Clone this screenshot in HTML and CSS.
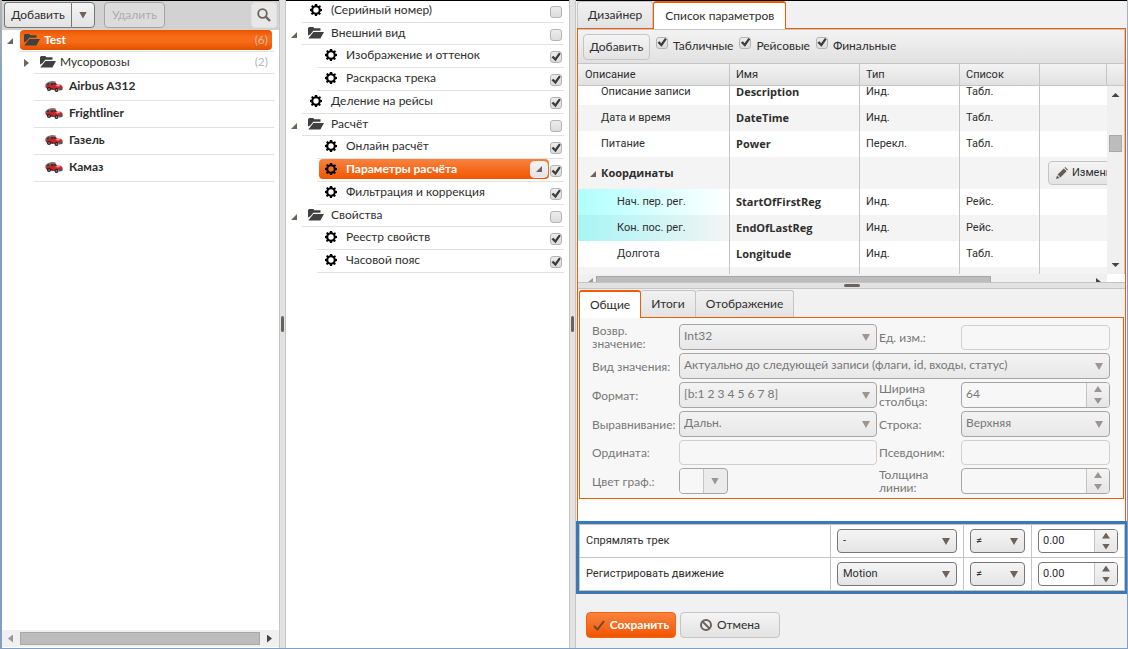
FILE: index.html
```html
<!DOCTYPE html>
<html lang="ru">
<head>
<meta charset="utf-8">
<title>Список параметров</title>
<link rel="stylesheet" href="styles.css">
</head>
<body>
<svg class="sprite" aria-hidden="true">
  <symbol id="folder" viewBox="0 0 16 12"><path fill="#404040" d="M0 1.2 1 0h4.2l1.2 1.3h6.1v2.4H5.2L2.5 7.2 0 8.6zM.3 11.5 5.4 4.9H16l-3.6 6.6z"/></symbol>
  <symbol id="gear" viewBox="0 0 12 12"><path fill="#000" fill-rule="evenodd" d="M4.9 0h2.2l.4 1.6 1 .4L10 1.2 11 2.4l-.9 1.4.4 1 1.5.3v2l-1.6.4-.4 1 .9 1.3-1.3 1.3-1.4-.9-.9.4L7 12H5l-.4-1.5-1-.4-1.400.9L.9 9.700l.9-1.300-.4-1L0 7V5l1.500-.4.4-1L1.100 2.300 2.400 1l1.300.9.9-.4zM6 3.300a2.700 2.700 0 1 0 0 5.400 2.700 2.700 0 0 0 0-5.400z"/></symbol>
  <symbol id="open" viewBox="0 0 6 6"><path fill="#6e6259" d="M6 0v6H0z"/></symbol>
  <symbol id="closed" viewBox="0 0 5 8"><path fill="#6e6259" d="M0 0l5 4-5 4z"/></symbol>
  <symbol id="car" viewBox="0 0 18 11"><path fill="#777" d="M0 3.500 3 1l4-1 4 .5L9 2 2 4.500z"/><path fill="#c9242c" d="M0 4.500 4 4l1.500-2L10.500 1.200 12 3.500l4 .3 1.500 1.700v2L10 9 1 7z"/><path fill="#333" d="M1 4.500 2.500 2.500 4.500 2 4 4.300zM5.500 4 6.300 2.300l1.900-.3v2.200zM8.900 2h1.400l1 1.800-2.400.3z"/><path fill="#f4a5a5" d="M10 4.700l3-.6 3 .6-3 .9z"/><path fill="#7e1018" d="M1.500 6.500 8 7.200l1 1.800-7-1z"/><circle cx="4" cy="8" r="2" fill="#222"/><circle cx="11.500" cy="9" r="2" fill="#222"/><circle cx="11.500" cy="9" r=".8" fill="#aaa"/><circle cx="4" cy="8" r=".8" fill="#aaa"/><path fill="#555" d="M13.500 7.200l4-.7V9l-3.500.5z"/></symbol>
</svg>
<div class="app">
  <aside class="objects">
    <div class="objects-bar">
      <div class="split"><button class="btn dark">Добавить</button><button class="btn dark drop" aria-label="Меню"><i class="down"></i></button></div>
      <button class="btn del" disabled>Удалить</button>
      <button class="btn find" aria-label="Поиск"><svg width="14" height="14" viewBox="0 0 14 14"><circle cx="5.500" cy="5.500" r="4.300" fill="none" stroke="#6a625d" stroke-width="1.800"/><path d="M8.500 8.500 13 13" stroke="#6a625d" stroke-width="2.400"/></svg></button>
    </div>
    <ul class="tree fleet">
      <li>
        <div class="row"><span class="tog"><svg width="6" height="6"><use href="#open"/></svg></span><div class="line"><div class="node deep"><svg width="16" height="12"><use href="#folder"/></svg><b>Test</b><span class="count">(6)</span></div></div></div>
        <ul>
          <li><div class="row"><span class="tog"><svg width="5" height="8"><use href="#closed"/></svg></span><div class="line"><div class="node"><svg width="16" height="12"><use href="#folder"/></svg><span>Мусоровозы</span><span class="count">(2)</span></div></div></div></li>
          <li><div class="row tall"><span class="tog"></span><div class="line"><div class="node"><svg width="18" height="11"><use href="#car"/></svg><b>Airbus A312</b></div></div></div></li>
          <li><div class="row tall"><span class="tog"></span><div class="line"><div class="node"><svg width="18" height="11"><use href="#car"/></svg><b>Frightliner</b></div></div></div></li>
          <li><div class="row tall"><span class="tog"></span><div class="line"><div class="node"><svg width="18" height="11"><use href="#car"/></svg><b>Газель</b></div></div></div></li>
          <li><div class="row tall"><span class="tog"></span><div class="line"><div class="node"><svg width="18" height="11"><use href="#car"/></svg><b>Камаз</b></div></div></div></li>
        </ul>
      </li>
    </ul>
    <div class="hbar"><i class="left"></i><div class="thumb"></div><i class="right"></i></div>
  </aside>
  <div class="vsplit"><i></i></div>
  <nav class="modules">
    <ul class="tree">
      <li><div class="row leaf"><span class="tog"></span><div class="line"><label class="node" for="m1"><svg width="16" height="12"><use href="#gear"/></svg><span>(Серийный номер)</span></label><input type="checkbox" id="m1"></div></div></li>
      <li>
        <div class="row"><span class="tog"><svg width="6" height="6"><use href="#open"/></svg></span><div class="line"><label class="node" for="m2"><svg width="16" height="12"><use href="#folder"/></svg><span>Внешний вид</span></label><input type="checkbox" id="m2"></div></div>
        <ul>
          <li><div class="row leaf"><span class="tog"></span><div class="line"><label class="node" for="m3"><svg width="16" height="12"><use href="#gear"/></svg><span>Изображение и оттенок</span></label><input type="checkbox" id="m3" checked></div></div></li>
          <li><div class="row leaf"><span class="tog"></span><div class="line"><label class="node" for="m4"><svg width="16" height="12"><use href="#gear"/></svg><span>Раскраска трека</span></label><input type="checkbox" id="m4" checked></div></div></li>
        </ul>
      </li>
      <li><div class="row leaf"><span class="tog"></span><div class="line"><label class="node" for="m5"><svg width="16" height="12"><use href="#gear"/></svg><span>Деление на рейсы</span></label><input type="checkbox" id="m5" checked></div></div></li>
      <li>
        <div class="row"><span class="tog"><svg width="6" height="6"><use href="#open"/></svg></span><div class="line"><label class="node" for="m6"><svg width="16" height="12"><use href="#folder"/></svg><span>Расчёт</span></label><input type="checkbox" id="m6"></div></div>
        <ul>
          <li><div class="row leaf"><span class="tog"></span><div class="line"><label class="node" for="m7"><svg width="16" height="12"><use href="#gear"/></svg><span>Онлайн расчёт</span></label><input type="checkbox" id="m7" checked></div></div></li>
          <li><div class="row leaf"><span class="tog"></span><div class="line"><div class="node current"><svg width="16" height="12"><use href="#gear"/></svg><label for="m8"><b>Параметры расчёта</b></label><button class="btn more" aria-label="Ещё"><svg width="6" height="6"><use href="#open"/></svg></button></div><input type="checkbox" id="m8" checked></div></div></li>
          <li><div class="row leaf"><span class="tog"></span><div class="line"><label class="node" for="m9"><svg width="16" height="12"><use href="#gear"/></svg><span>Фильтрация и коррекция</span></label><input type="checkbox" id="m9" checked></div></div></li>
        </ul>
      </li>
      <li>
        <div class="row"><span class="tog"><svg width="6" height="6"><use href="#open"/></svg></span><div class="line"><label class="node" for="m10"><svg width="16" height="12"><use href="#folder"/></svg><span>Свойства</span></label><input type="checkbox" id="m10"></div></div>
        <ul>
          <li><div class="row leaf"><span class="tog"></span><div class="line"><label class="node" for="m11"><svg width="16" height="12"><use href="#gear"/></svg><span>Реестр свойств</span></label><input type="checkbox" id="m11" checked></div></div></li>
          <li><div class="row leaf"><span class="tog"></span><div class="line"><label class="node" for="m12"><svg width="16" height="12"><use href="#gear"/></svg><span>Часовой пояс</span></label><input type="checkbox" id="m12" checked></div></div></li>
        </ul>
      </li>
    </ul>
  </nav>
  <div class="vsplit"><i></i></div>
  <main class="editor">
    <div class="tabs main-tabs"><button class="tab">Дизайнер</button><button class="tab active">Список параметров</button></div>
    <section class="panel">
      <div class="toolbar">
        <button class="btn">Добавить</button>
        <label><input type="checkbox" checked>Табличные</label>
        <label><input type="checkbox" checked>Рейсовые</label>
        <label><input type="checkbox" checked>Финальные</label>
      </div>
      <table class="grid head">
        <colgroup><col class="c1"><col class="c2"><col class="c3"><col class="c4"><col><col class="c6"></colgroup>
        <thead><tr><th>Описание</th><th>Имя</th><th>Тип</th><th>Список</th><th></th><th></th></tr></thead>
      </table>
      <div class="view">
        <div class="clip">
          <table class="grid body">
            <colgroup><col class="c1"><col class="c2"><col class="c3"><col class="c4"><col></colgroup>
            <tbody>
              <tr><td class="in1">Описание записи</td><td><b>Description</b></td><td>Инд.</td><td>Табл.</td><td></td></tr>
              <tr><td class="in1">Дата и время</td><td><b>DateTime</b></td><td>Инд.</td><td>Табл.</td><td></td></tr>
              <tr><td class="in1">Питание</td><td><b>Power</b></td><td>Перекл.</td><td>Табл.</td><td></td></tr>
              <tr class="group"><td><svg width="6" height="6"><use href="#open"/></svg><b>Координаты</b></td><td></td><td></td><td></td><td class="act"><button class="btn"><svg width="12" height="12" viewBox="0 0 12 12"><path fill="#655b55" d="M0 12l1-3.600L3.600 11zM1.600 7.600 7.800 1.400l2.800 2.800-6.200 6.200zM8.500.8 9.300 0 12 2.700l-.8.800z"/></svg>Изменить</button></td></tr>
              <tr class="mark"><td class="in2">Нач. пер. рег.</td><td><b>StartOfFirstReg</b></td><td>Инд.</td><td>Рейс.</td><td></td></tr>
              <tr class="mark"><td class="in2">Кон. пос. рег.</td><td><b>EndOfLastReg</b></td><td>Инд.</td><td>Рейс.</td><td></td></tr>
              <tr><td class="in2">Долгота</td><td><b>Longitude</b></td><td>Инд.</td><td>Табл.</td><td></td></tr>
              <tr><td></td><td></td><td></td><td></td><td></td></tr>
            </tbody>
          </table>
        </div>
        <div class="vbar"><i class="up"></i><div class="thumb"></div><i class="down"></i></div>
      </div>
      <div class="hclip"><i class="left"></i><div class="thumb"></div><i class="right"></i></div>
      <div class="hsplit"><i></i></div>
      <div class="tabs sub-tabs"><button class="tab active">Общие</button><button class="tab">Итоги</button><button class="tab">Отображение</button></div>
      <form class="props">
        <label for="f1">Возвр.<br>значение:</label>
        <div class="sel"><select id="f1" disabled><option>Int32</option></select></div>
        <label class="second" for="f2">Ед. изм.:</label>
        <input id="f2" type="text" disabled>
        <label for="f3">Вид значения:</label>
        <div class="sel wide"><select id="f3" disabled><option>Актуально до следующей записи (флаги, id, входы, статус)</option></select></div>
        <label for="f4">Формат:</label>
        <div class="sel"><select id="f4" disabled><option>[b:1 2 3 4 5 6 7 8]</option></select></div>
        <label class="second" for="f5">Ширина<br>столбца:</label>
        <div class="num off"><input id="f5" type="text" value="64" disabled><div class="spin"><button type="button" disabled aria-label="Больше"><i class="up"></i></button><button type="button" disabled aria-label="Меньше"><i class="down"></i></button></div></div>
        <label for="f6">Выравнивание:</label>
        <div class="sel"><select id="f6" disabled><option>Дальн.</option></select></div>
        <label class="second" for="f7">Строка:</label>
        <div class="sel"><select id="f7" disabled><option>Верхняя</option></select></div>
        <label for="f8">Ордината:</label>
        <input id="f8" type="text" disabled>
        <label class="second" for="f9">Псевдоним:</label>
        <input id="f9" type="text" disabled>
        <label for="f10">Цвет граф.:</label>
        <button class="color" id="f10" type="button" disabled><span class="swatch"></span><i class="down"></i></button>
        <label class="second" for="f11">Толщина<br>линии:</label>
        <div class="num off"><input id="f11" type="text" disabled><div class="spin"><button type="button" disabled aria-label="Больше"><i class="up"></i></button><button type="button" disabled aria-label="Меньше"><i class="down"></i></button></div></div>
      </form>
    </section>
    <div class="rules">
      <table>
        <colgroup><col><col class="r2"><col class="r3"><col class="r4"></colgroup>
        <tbody>
          <tr><td>Спрямлять трек</td><td><div class="sel"><select aria-label="Спрямлять трек"><option>-</option></select></div></td><td><div class="sel"><select aria-label="Сравнение"><option>≠</option></select></div></td><td><div class="num"><input type="text" value="0.00" aria-label="Значение"><div class="spin"><button aria-label="Больше"><i class="up"></i></button><button aria-label="Меньше"><i class="down"></i></button></div></div></td></tr>
          <tr><td>Регистрировать движение</td><td><div class="sel"><select aria-label="Регистрировать движение"><option>Motion</option></select></div></td><td><div class="sel"><select aria-label="Сравнение"><option>≠</option></select></div></td><td><div class="num"><input type="text" value="0.00" aria-label="Значение"><div class="spin"><button aria-label="Больше"><i class="up"></i></button><button aria-label="Меньше"><i class="down"></i></button></div></div></td></tr>
        </tbody>
      </table>
    </div>
    <footer class="actions">
      <button class="btn save"><svg width="12" height="11" viewBox="0 0 12 11"><path d="M1 6l3.500 3.500L11 1" fill="none" stroke="#6b4a33" stroke-width="2"/></svg><b>Сохранить</b></button>
      <button class="btn cancel"><svg width="12" height="12" viewBox="0 0 12 12"><circle cx="6" cy="6" r="5" fill="none" stroke="#6a625d" stroke-width="2"/><path d="M2.500 2.500l7 7" stroke="#6a625d" stroke-width="2"/></svg>Отмена</button>
    </footer>
  </main>
</div>
</body>
</html>
```
FILE: styles.css
```css
* { box-sizing: border-box; }
body { margin: 0; font: 12px/20px Lato, "Open Sans", sans-serif; color: #2e2e2e; }
button, input, select { font: inherit; color: inherit; margin: 0; }
ul { list-style: none; margin: 0; padding: 0; }
b { font-weight: 700; }
svg { flex: none; }
.sprite { display: none; }

.app {
  display: grid; grid-template-columns: 277px 7px 283px 7px minmax(0, 1fr);
  height: 100vh; overflow: hidden; padding: 0 1px 1px 2px;
  background: linear-gradient(#b4b4b4, #7f9fc6 90px);
}
.objects, .modules, .editor { background: #fff; border-top: 1px solid #000; min-height: 0; overflow: hidden; }
.objects { display: flex; flex-direction: column; }

.btn {
  display: inline-flex; align-items: center; justify-content: center;
  border: 1px solid #c5c5c5; border-radius: 4px; padding: 0 7px;
  background: linear-gradient(#f4f4f4, #e3e3e3); white-space: nowrap;
}
.btn.dark { border-color: #777; }

i.down, i.up, i.left, i.right { display: block; flex: none; background: #6e6259; }
i.down, i.up { width: 8px; height: 7px; }
i.down { clip-path: polygon(0 0, 100% 0, 50% 100%); }
i.up { clip-path: polygon(50% 0, 100% 100%, 0 100%); }
i.left, i.right { width: 5px; height: 8px; background: #444; }
i.left { clip-path: polygon(100% 0, 100% 100%, 0 50%); background: #999; }
i.right { clip-path: polygon(0 0, 100% 50%, 0 100%); }

.objects-bar { display: flex; gap: 9px; height: 29px; padding: 1px 2px 2px; background: #d2d2d2; }
.split { display: flex; }
.split .btn:first-child { width: 67px; border-radius: 4px 0 0 4px; border-right: 0; }
.split .drop { border-radius: 0 4px 4px 0; width: 24px; padding: 0; }
.del { width: 61px; border-color: #a5a5a5; background: #dcdcdc; color: #acacac; }
.find { margin-left: auto; width: 26px; padding: 0; border-color: #e0e0e0; background: #e8e8e8; }

.tree { padding-right: 5px; }
.tree ul { padding-left: 15px; }
.row { display: flex; height: 22px; }
.leaf { height: 23px; }
.tall { height: 27px; }
.tog { flex: 0 0 16px; display: flex; align-items: center; justify-content: center; }
.line { flex: 1; display: flex; align-items: flex-start; border-bottom: 1px solid #e2e2e2; }
.node { flex: 1; display: flex; align-items: center; height: 20px; margin-left: 2px; padding-left: 4px; gap: 7px; border-radius: 4px; white-space: nowrap; }
.fleet ul { padding-left: 16px; }
.fleet .node { gap: 4px; margin-right: 2px; padding-right: 4px; }
.fleet .tall .node { padding-left: 9px; gap: 6px; height: 24px; }
.count { margin-left: auto; color: #b8b8b8; }
.deep { background: linear-gradient(#e95400, #f76a16 30%, #f76a16 60%, #e25000); color: #fff; }
.deep .count { color: #dcb8a4; }
.node.current { background: linear-gradient(#f9833f, #f25500); color: #fff; padding-right: 1px; }
.more { width: 18px; height: 17px; padding: 0; margin-left: auto; border-color: #eee; }
.modules { border-top: 0; box-shadow: inset 0 1px #000; }
.modules .tog { padding-top: 2px; }
.modules .line > input { margin: 6px 2px 0 1px; }

input[type="checkbox"] {
  appearance: none; flex: none; width: 12px; height: 12px; margin: 0;
  border: 1px solid #b4b4b4; border-radius: 3px; background: linear-gradient(#ececec, #dcdcdc);
}
input[type="checkbox"]:checked::before {
  content: ""; display: block; width: 10px; height: 10px; background: #3c3c3c;
  clip-path: polygon(5% 52%, 24% 38%, 42% 58%, 80% 5%, 98% 18%, 46% 92%);
}

.vsplit { display: flex; align-items: center; justify-content: center; background: #e2e2e2; border: solid #c5c5c5; border-width: 0 1px; }
.vsplit i { width: 3px; height: 16px; border-radius: 2px; background: #6a625d; }

.hbar { margin-top: auto; display: flex; align-items: center; gap: 7px; height: 17px; margin-bottom: 1px; padding: 0 7px 0 6px; background: #f0f0f0; }
.thumb { background: #bcbcbc; border: 1px solid #a8a8a8; }
.hbar .thumb { flex: 1; height: 13px; }

.editor { display: flex; flex-direction: column; background: #f1f1f1; }
.tabs { display: flex; }
.tab {
  height: 27px; padding: 0 10px; border: 1px solid #c5c5c5; border-bottom: 0; border-left-width: 0;
  border-radius: 3px 3px 0 0; background: linear-gradient(#f1f1f1, #e3e3e3); font-size: 12px;
}
.tab:first-child { border-left-width: 1px; }
.tab.active { height: 28px; margin-bottom: -1px; border: 1px solid #f25c05; border-top-width: 2px; border-bottom: 0; background: #fff; z-index: 1; }
.main-tabs { padding: 0 1px; align-items: flex-end; }
.main-tabs .active { padding: 0 11px; }
.panel { flex: 1; min-height: 0; display: flex; flex-direction: column; margin: 0 1px; padding-bottom: 22px; border: 1px solid #f25c05; border-bottom: 0; background: #fff; }

.toolbar { display: flex; align-items: center; gap: 6px; flex: none; height: 35px; padding: 0 5px; border: 1px solid #c5c5c5; border-left: 0; background: linear-gradient(#f3f3f3, #e1e1e1); }
.toolbar .btn { width: 67px; height: 26px; }
.toolbar label { display: flex; align-items: flex-start; gap: 5px; height: 22px; }
.toolbar input { margin-top: 1px; }

.grid, .rules table { width: 100%; table-layout: fixed; font: 11px/16px Roboto, "Open Sans", sans-serif; }
.grid { border-collapse: separate; border-spacing: 0; }
.c1 { width: 152px; } .c2 { width: 130px; } .c3 { width: 100px; } .c4 { width: 80px; } .c6 { width: 18px; }
.grid th, .grid td { padding: 0 6px; border-right: 1px solid #c5c5c5; text-align: left; font-weight: 400; white-space: nowrap; overflow: hidden; }
.grid th { height: 22px; border-bottom: 1px solid #c5c5c5; background: linear-gradient(#f3f3f3, #e1e1e1); }
.grid th:first-child { padding-left: 7px; }
.grid td { height: 26px; }
.grid b { font-family: "Open Sans", sans-serif; }
.body td:last-child { border-right: 0; }
.body tr:nth-child(even) td { background: #f4f4f4; }
.body .in1 { padding-left: 23px; }
.body .in2 { padding-left: 39px; }
.body .group td { height: 32px; }
.body .group td:first-child { padding-left: 12px; }
.group td > svg { margin-right: 5px; }
.body .act { padding: 0 0 0 8px; }
.act .btn { height: 24px; gap: 4px; vertical-align: middle; }
.body .mark td:first-child { background: linear-gradient(90deg, #b0ffff, #fff); }
.body .mark:nth-child(even) td:first-child { background: linear-gradient(90deg, #a8f5f5, #f4f4f4); }
.view { flex: 1; min-height: 0; display: flex; border-right: 1px solid #c5c5c5; }
.clip { flex: 1; min-width: 0; overflow: hidden; }
.body { margin-top: -7px; }
.vbar { flex: 0 0 17px; display: flex; flex-direction: column; align-items: center; padding: 7px 0; background: #f0f0f0; }
.vbar i { height: 4px; background: #444; }
.vbar .thumb { width: 13px; height: 17px; margin: 38px 0 auto; }
.hclip { flex: none; display: flex; align-items: flex-start; height: 8px; padding: 2px 6px 0 10px; margin-right: 18px; gap: 3px; background: #f0f0f0; overflow: hidden; }
.hclip .thumb { flex: 0 1 395px; height: 10px; }
.hclip .right { margin-left: auto; }
.hclip i { margin-top: 2px; }
.hsplit { flex: none; display: flex; align-items: center; justify-content: center; height: 7px; background: #e2e2e2; border: solid #c5c5c5; border-width: 1px 0; }
.hsplit i { width: 16px; height: 3px; border-radius: 2px; background: #6a625d; }

.sub-tabs { flex: none; align-items: flex-end; height: 28px; padding: 0 1px; background: #f1f1f1; }
.props {
  flex: none; display: grid; grid-template-columns: 87px minmax(0, 1fr) 84px 149px; row-gap: 3px;
  margin: 0 1px; padding: 6px 13px 4px 12px; border: 1px solid #f25c05; background: #f7f7f7; color: #777;
  align-items: center;
}
.props label { line-height: 13px; white-space: nowrap; }
.props .second { padding-left: 2px; }
.wide { grid-column: span 3; }
.sel { position: relative; }
.sel::after { content: ""; position: absolute; right: 7px; top: 50%; width: 8px; height: 7px; margin-top: -3px; background: #6e6259; clip-path: polygon(0 0, 100% 0, 50% 100%); pointer-events: none; }
select {
  display: block; appearance: none; width: 100%; height: 24px; padding: 0 20px 0 5px;
  border: 1px solid #777; border-radius: 4px; background: linear-gradient(#f5f5f5, #e4e4e4); line-height: 18px;
}
.props select { height: 26px; padding: 0 20px 2px 4px; border-color: #a5a5a5; background: linear-gradient(#f3f3f3, #e8e8e8); color: #777; opacity: 1; }
.props .sel::after, .off i { background: #9c9590; }
.props > input { width: 100%; height: 25px; border: 1px solid #d0d0d0; border-radius: 4px; background: #f7f7f7; }
.num { display: flex; height: 24px; border: 1px solid #777; border-radius: 4px; overflow: hidden; background: #fff; }
.num input { flex: 1; min-width: 0; width: 0; border: 0; padding: 0 4px; background: transparent; }
.num.off { height: 26px; border-color: #a5a5a5; background: #f7f7f7; color: #777; }
.off input { padding-bottom: 2px; }
.spin { flex: 0 0 23px; display: flex; flex-direction: column; border-left: 1px solid #c5c5c5; background: linear-gradient(#f4f4f4, #e6e6e6); }
.spin button { flex: 1; display: flex; align-items: center; justify-content: center; padding: 0; border: 0; background: none; }
.num i { height: 6px; }
.color { display: flex; align-items: center; width: 49px; height: 26px; padding: 0; border: 1px solid #a5a5a5; border-radius: 4px; background: #ebebeb; }
.color .swatch { align-self: stretch; width: 24px; margin-right: 7px; border-right: 1px solid #c5c5c5; border-radius: 3px 0 0 3px; background: #f7f7f7; }
.props .color i { background: #9c9590; }

.rules { flex: none; border: 3px solid #3a78b8; margin-right: -1px; background: #fff; }
.rules table { border-collapse: collapse; }
.r2 { width: 133px; } .r3 { width: 68px; } .r4 { width: 93px; }
.rules td { height: 33px; padding: 0 6px; border: 1px solid #c5c5c5; }
.actions { flex: none; display: flex; gap: 4px; height: 54px; padding: 18px 10px 0; }
.actions .btn { height: 26px; gap: 5px; }
.save { width: 90px; border-color: #f0640f; background: linear-gradient(#f9833f, #f25500); color: #fff; }
.cancel { width: 100px; }
```
